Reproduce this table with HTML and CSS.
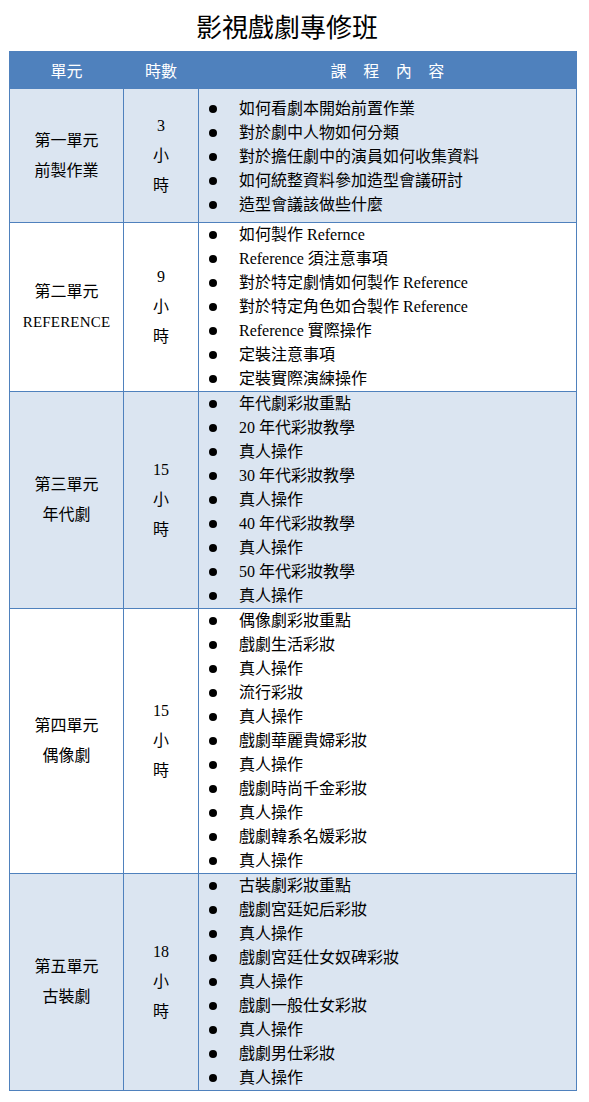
FILE: index.html
```html
<!DOCTYPE html>
<html lang="zh-Hant">
<head>
<meta charset="utf-8">
<title>影視戲劇專修班</title>
<link rel="stylesheet" href="styles.css">
</head>
<body>
<div class="page">
  <h1 class="title">影視戲劇專修班</h1>
  <table class="course">
    <thead>
      <tr>
        <th class="c-unit">單元</th>
        <th class="c-hours">時數</th>
        <th class="c-content"><span class="spaced">課 程 內 容</span></th>
      </tr>
    </thead>
    <tbody>
      <tr class="shade first">
        <td class="unit">第一單元<br>前製作業</td>
        <td class="hours">3<br>小<br>時</td>
        <td class="content">
          <ul>
            <li>如何看劇本開始前置作業</li>
            <li>對於劇中人物如何分類</li>
            <li>對於擔任劇中的演員如何收集資料</li>
            <li>如何統整資料參加造型會議研討</li>
            <li>造型會議該做些什麼</li>
          </ul>
        </td>
      </tr>
      <tr>
        <td class="unit">第二單元<br><span class="latin">REFERENCE</span></td>
        <td class="hours">9<br>小<br>時</td>
        <td class="content">
          <ul>
            <li>如何製作 Refernce</li>
            <li>Reference 須注意事項</li>
            <li>對於特定劇情如何製作 Reference</li>
            <li>對於特定角色如合製作 Reference</li>
            <li>Reference 實際操作</li>
            <li>定裝注意事項</li>
            <li>定裝實際演練操作</li>
          </ul>
        </td>
      </tr>
      <tr class="shade">
        <td class="unit">第三單元<br>年代劇</td>
        <td class="hours">15<br>小<br>時</td>
        <td class="content">
          <ul>
            <li>年代劇彩妝重點</li>
            <li>20 年代彩妝教學</li>
            <li>真人操作</li>
            <li>30 年代彩妝教學</li>
            <li>真人操作</li>
            <li>40 年代彩妝教學</li>
            <li>真人操作</li>
            <li>50 年代彩妝教學</li>
            <li>真人操作</li>
          </ul>
        </td>
      </tr>
      <tr>
        <td class="unit">第四單元<br>偶像劇</td>
        <td class="hours">15<br>小<br>時</td>
        <td class="content">
          <ul>
            <li>偶像劇彩妝重點</li>
            <li>戲劇生活彩妝</li>
            <li>真人操作</li>
            <li>流行彩妝</li>
            <li>真人操作</li>
            <li>戲劇華麗貴婦彩妝</li>
            <li>真人操作</li>
            <li>戲劇時尚千金彩妝</li>
            <li>真人操作</li>
            <li>戲劇韓系名媛彩妝</li>
            <li>真人操作</li>
          </ul>
        </td>
      </tr>
      <tr class="shade">
        <td class="unit">第五單元<br>古裝劇</td>
        <td class="hours">18<br>小<br>時</td>
        <td class="content">
          <ul>
            <li>古裝劇彩妝重點</li>
            <li>戲劇宮廷妃后彩妝</li>
            <li>真人操作</li>
            <li>戲劇宮廷仕女奴碑彩妝</li>
            <li>真人操作</li>
            <li>戲劇一般仕女彩妝</li>
            <li>真人操作</li>
            <li>戲劇男仕彩妝</li>
            <li>真人操作</li>
          </ul>
        </td>
      </tr>
    </tbody>
  </table>
</div>
</body>
</html>
```

FILE: styles.css
```css
html, body {
  margin: 0;
  padding: 0;
  background: #ffffff;
}

body {
  font-family: "Liberation Serif", "Noto Sans CJK TC", serif;
  font-size: 16px;
  color: #000000;
}

.page {
  padding: 0 12px 0 9px;
}

.title {
  margin: 0;
  height: 51px;
  line-height: 51px;
  text-align: center;
  font-family: "Noto Sans CJK TC", sans-serif;
  font-weight: normal;
  font-size: 26px;
  color: #000000;
  padding-right: 12px;
}

.course {
  width: 568px;
  border-collapse: collapse;
  table-layout: fixed;
}

.course th,
.course td {
  border: 1px solid #4f81bd;
  padding: 0;
}

.course th {
  background: #4f81bd;
  color: #ffffff;
  font-family: "Noto Sans CJK TC", sans-serif;
  font-weight: normal;
  font-size: 16px;
  height: 36px;
  line-height: 36px;
  text-align: center;
}

.c-unit { width: 113px; }
.c-hours { width: 74px; }

.spaced {
  word-spacing: 13px;
}

.shade td {
  background: #dbe5f1;
}

.unit,
.hours {
  text-align: center;
  vertical-align: middle;
  line-height: 30px;
}

.unit { padding-top: 1px; }

.hours { padding-top: 2px; }

.latin {
  font-size: 15px;
  letter-spacing: 0.2px;
}

.content {
  vertical-align: top;
}

.content ul {
  list-style: none;
  margin: 0;
  padding: 0;
}

.first .content ul {
  padding: 8px 0 5px;
}

.content li {
  display: flex;
  align-items: center;
  height: 24px;
  line-height: 24px;
  padding-left: 10px;
  white-space: nowrap;
}

.content li::before {
  content: "";
  flex: none;
  width: 8px;
  height: 8px;
  border-radius: 50%;
  background: #000000;
  margin-right: 22px;
}
```
